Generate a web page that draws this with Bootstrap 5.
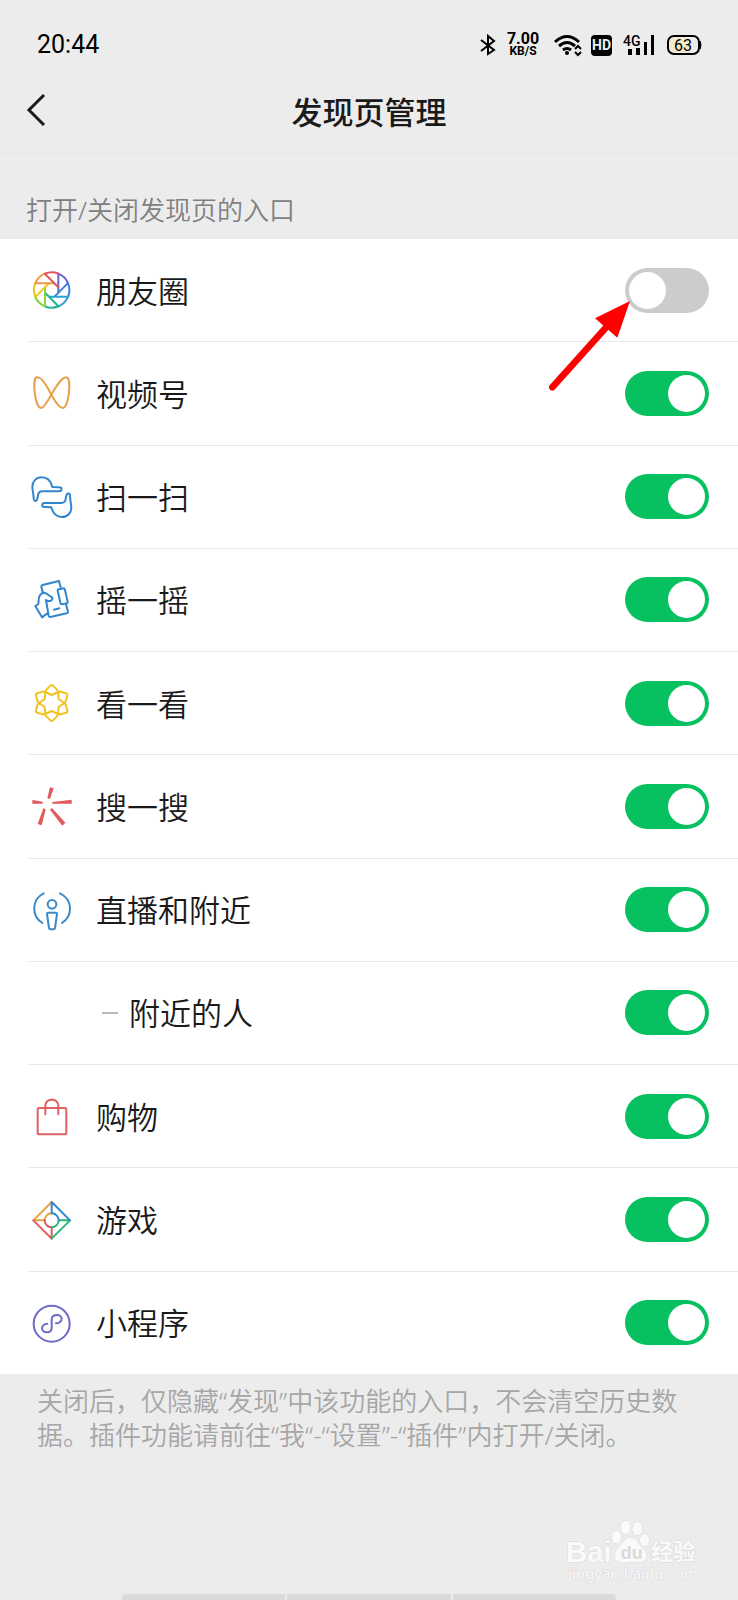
<!DOCTYPE html>
<html lang="zh-CN">
<head>
<meta charset="utf-8">
<meta name="viewport" content="width=device-width, initial-scale=1">
<title>发现页管理</title>
<link href="https://cdn.jsdelivr.net/npm/bootstrap@5.3.0/dist/css/bootstrap.min.css" rel="stylesheet">
<style>
  body { background: #ececec; color: #1a1a1a; font-family: "Noto Sans", "Noto Sans CJK SC", sans-serif; }
  svg { display: block; flex: none; overflow: visible; }
  .statusbar { height: 70px; padding: 20px 36px 0 37px; color: #000; font-family: Roboto, sans-serif; }
  .clock { font-size: 25px; line-height: 50px; }
  .speed { font-size: 16px; line-height: 13px; font-weight: 700; width: 34px; margin: 0 14px 0 10px; }
  .speed small { display: block; font-size: 12px; font-weight: 700; }
  .hd { width: 21px; height: 21px; border-radius: 4px; background: #000; color: #ececec; font-size: 14px; line-height: 21px; font-weight: 700; margin: 0 15px 0 9px; }
  .titlebar { height: 84px; border-bottom: 1px solid #e6e6e6; padding: 0 20px; }
  .titlebar h1 { font-size: 31px; line-height: 40px; font-weight: 500; }
  .back { width: 32px; height: 44px; }
  .section-title { font-size: 26px; line-height: 36px; font-weight: 350; padding: 38px 26px 11px; color: #808080; }
  .entries { min-height: 1135px; }
  .entry { margin-left: 29px; padding: 0 29px 0 2px; border-bottom: 1px solid #e6e6e6; min-height: 100px; }
  .entry:last-child { border-bottom: 0; }
  .entry label { gap: 25px; font-size: 31px; line-height: 44px; font-weight: 350; }
  .entry label > b { font-weight: inherit; padding-top: 1px; }
  .sub { padding-left: 71px; }
  .entry .sub { gap: 11px; }
  .dash { width: 16px; height: 2px; background: #b8b8b8; }
  .entry .form-check-input { width: 84px; height: 45px; margin: 0; padding: 4px; border: 0; border-radius: 23px; background: #ccc; flex: none; }
  .entry .form-check-input::before { content: ""; display: block; width: 37px; height: 37px; border-radius: 50%; background: #fff; }
  .entry .form-check-input:checked { background: #07c160; }
  .entry .form-check-input:checked::before { margin-left: auto; }
  .ico { width: 40px; height: 40px; fill: none; stroke-width: 6; stroke-linejoin: round; stroke-linecap: round; }
  .pointer { right: 103px; top: 56px; z-index: 2; pointer-events: none; }
  .note { font-size: 26px; line-height: 34px; font-weight: 350; padding: 10px 37px; color: #a6a6a6; }
  .watermark { margin: 0 38px 10px 0; }
  .homebar { width: 67%; gap: 2px; }
  .homebar span { height: 6px; background: #dadada; }
  .homebar span:first-child { border-radius: 4px 0 0 0; }
  .homebar span:last-child { border-radius: 0 4px 0 0; }
</style>
</head>
<body>
<div class="min-vh-100 d-flex flex-column">
  <header>
    <div class="statusbar d-flex align-items-center justify-content-between">
      <span class="clock">20:44</span>
      <div class="d-flex align-items-center">
        <svg width="16" height="22" viewBox="0 0 16 22" fill="none" stroke="#000" stroke-width="2"><path d="M1 6 14 16 8 20V2l6 5L1 17"/></svg>
        <div class="speed text-center">7.00<small>KB/S</small></div>
        <svg width="28" height="22" viewBox="0 0 28 22" fill="none" stroke="#000" stroke-width="3"><path d="M1 8q12-11 24 0M5 12q8-7 16 0M9 16q4-3 8 0"/><circle cx="13" cy="19" r="2" fill="#000" stroke="none"/><path d="m21 15 3-3 3 3M21 18l3 3 3-3" stroke-width="2"/></svg>
        <span class="hd text-center">HD</span>
        <svg width="31" height="22" viewBox="0 0 31 22"><text x="-4" y="12" font-size="14" font-weight="500">4G</text><path d="M1 15h4v6H1zM9 14h4v7H9zM17 8h3v13h-3zM24 1h3v20h-3z"/></svg>
        <svg class="ms-2" width="36" height="22" viewBox="0 0 36 22"><rect x="2" y="2" width="31" height="18" rx="6" fill="#ececec" stroke="#000" stroke-width="2"/><path d="M8 4h13v14H8q-4 0-4-4V8q0-4 4-4z" fill="#f4ebc9"/><path d="M34 7q2 4 0 8z" stroke="#000"/><text x="17" y="17" font-size="16" text-anchor="middle">63</text></svg>
      </div>
    </div>
    <nav class="titlebar d-flex align-items-center position-relative">
      <button type="button" class="back btn p-0 border-0 position-absolute" aria-label="返回">
        <svg width="32" height="40" viewBox="0 0 32 40" fill="none" stroke="#1a1a1a" stroke-width="3"><path d="M24 3 9 18l15 15"/></svg>
      </button>
      <h1 class="m-0 w-100 text-center">发现页管理</h1>
    </nav>
  </header>

  <main>
    <h2 class="section-title m-0">打开/关闭发现页的入口</h2>
    <div class="entries bg-white d-flex flex-column">
      <div class="entry flex-fill d-flex align-items-center position-relative">
        <label for="moments" class="d-flex align-items-center flex-fill">
          <svg class="ico" viewBox="33 45 120 120">
            <defs><path id="blade" d="M115 112V56A53 53 0 0 1 144 84"/></defs>
            <use href="#blade" stroke="#6467d0"/>
            <use href="#blade" stroke="#3d7fdb" transform="rotate(45 95 105)"/>
            <use href="#blade" stroke="#2ba0d4" transform="rotate(90 95 105)"/>
            <use href="#blade" stroke="#20b491" transform="rotate(135 95 105)"/>
            <use href="#blade" stroke="#8bd43a" transform="rotate(180 95 105)"/>
            <use href="#blade" stroke="#efc51b" transform="rotate(225 95 105)"/>
            <use href="#blade" stroke="#ee9a45" transform="rotate(270 95 105)"/>
            <use href="#blade" stroke="#df5560" transform="rotate(315 95 105)"/>
          </svg><b>朋友圈</b></label>
        <input class="form-check-input" type="checkbox" role="switch" id="moments">
        <svg class="pointer position-absolute" width="90" height="100" viewBox="45 135 270 300"><path d="M67 412 230 230" stroke="red" stroke-width="20" stroke-linecap="round"/><path d="M300 153 262 263 195 205z" fill="red"/></svg>
      </div>
      <div class="entry flex-fill d-flex align-items-center">
        <label for="channels" class="d-flex align-items-center flex-fill">
          <svg class="ico" viewBox="33 357 120 120" stroke="#e6a04b"><path d="M95 424C82 398 63 367 50 370 36 374 44 462 64 462 80 462 112 370 139 370 156 372 146 455 130 462 118 464 105 442 95 424z"/></svg><b>视频号</b></label>
        <input class="form-check-input" type="checkbox" role="switch" id="channels" checked>
      </div>
      <div class="entry flex-fill d-flex align-items-center">
        <label for="scan" class="d-flex align-items-center flex-fill">
          <svg class="ico" viewBox="33 51 120 120" stroke="#2f86cf"><defs><path id="hand" d="M43 122C51 125 52 118 54 106 55 96 60 94 68 94H117C127 94 127 82 117 82L97 81C93 65 85 52 65 52 48 52 37 65 37 80 37 92 41 100 41 115Q41 121 43 122z"/></defs><use href="#hand"/><use href="#hand" transform="rotate(180 95.500 111.500)"/></svg><b>扫一扫</b></label>
        <input class="form-check-input" type="checkbox" role="switch" id="scan" checked>
      </div>
      <div class="entry flex-fill d-flex align-items-center">
        <label for="shake" class="d-flex align-items-center flex-fill">
          <svg class="ico" viewBox="33 360 120 120" stroke="#2f86cf"><path d="M68 397 64 380Q64 376 68 375L117 363 122 382M138 433 144 455Q144 459 140 460L91 471Q87 471 86 467L78 420M78 420Q86 426 94 421 101 416 93 410L76 399C64 396 55 408 56 422L55 432 46 438 66 472 82 460M102 449 118 445"/><rect x="117" y="386" width="22" height="46" rx="5" transform="rotate(-13 128 409)"/></svg><b>摇一摇</b></label>
        <input class="form-check-input" type="checkbox" role="switch" id="shake" checked>
      </div>
      <div class="entry flex-fill d-flex align-items-center">
        <label for="look" class="d-flex align-items-center flex-fill">
          <svg class="ico" viewBox="33 40 120 120" stroke="#f2c31e"><defs><path id="petal" d="M76 67Q77 62 80 59L91 48Q95 44 99 48L110 59Q113 62 114 67L95 76z"/></defs>
            <use href="#petal"/><use href="#petal" transform="rotate(60 95 100)"/><use href="#petal" transform="rotate(120 95 100)"/><use href="#petal" transform="rotate(180 95 100)"/><use href="#petal" transform="rotate(240 95 100)"/><use href="#petal" transform="rotate(300 95 100)"/></svg><b>看一看</b></label>
        <input class="form-check-input" type="checkbox" role="switch" id="look" checked>
      </div>
      <div class="entry flex-fill d-flex align-items-center">
        <label for="search" class="d-flex align-items-center flex-fill">
          <svg class="ico" viewBox="33 349 120 120"><path fill="#e05a5c" d="M90 353 101 356 90 388 82 386zM37 391 68 396V402L37 402zM155 390V402L97 402V397zM70 416 77 419 65 467 53 463zM90 420 96 415 136 459 127 468z"/></svg><b>搜一搜</b></label>
        <input class="form-check-input" type="checkbox" role="switch" id="search" checked>
      </div>
      <div class="entry flex-fill d-flex align-items-center">
        <label for="live" class="d-flex align-items-center flex-fill">
          <svg class="ico" viewBox="33 59 120 120" stroke="#3b8ac6"><path d="M71 69C34 88 34 137 67 158M120 69C159 88 159 137 126 158M84 127H108Q111 127 111 131L105 173Q104 177 101 177H91Q88 177 87 173L81 131Q81 127 84 127z"/><circle cx="96" cy="102" r="13"/></svg><b>直播和附近</b></label>
        <input class="form-check-input" type="checkbox" role="switch" id="live" checked>
      </div>
      <div class="entry flex-fill d-flex align-items-center">
        <label for="nearby" class="sub d-flex align-items-center flex-fill"><span class="dash"></span><b>附近的人</b></label>
        <input class="form-check-input" type="checkbox" role="switch" id="nearby" checked>
      </div>
      <div class="entry flex-fill d-flex align-items-center">
        <label for="shopping" class="d-flex align-items-center flex-fill">
          <svg class="ico" viewBox="33 48 120 120" stroke="#df6161"><rect x="53" y="84" width="86" height="79" rx="5"/><path d="M76 103V75a20 20 0 0 1 39 0V103"/></svg><b>购物</b></label>
        <input class="form-check-input" type="checkbox" role="switch" id="shopping" checked>
      </div>
      <div class="entry flex-fill d-flex align-items-center">
        <label for="games" class="d-flex align-items-center flex-fill">
          <svg class="ico" viewBox="33 358 120 120"><path stroke="#e8a143" d="M95 364 40 419H74A21 21 0 0 1 95 398"/><path stroke="#df5a5c" d="M40 419 95 474V440A21 21 0 0 1 74 419"/><path stroke="#27b978" d="M95 474 150 419H116A21 21 0 0 1 95 440"/><path stroke="#2f86cf" d="M150 419 95 364V398A21 21 0 0 1 116 419"/></svg><b>游戏</b></label>
        <input class="form-check-input" type="checkbox" role="switch" id="games" checked>
      </div>
      <div class="entry flex-fill d-flex align-items-center">
        <label for="mini" class="d-flex align-items-center flex-fill">
          <svg class="ico" viewBox="33 667 120 120" stroke="#6d6bc8"><circle cx="95" cy="729" r="54"/><path d="M108 728C118 728 125 721 125 715 125 707 118 703 111 703 101 703 95 709 95 717V742C95 750 89 755 80 755 72 755 66 750 66 743 66 736 73 729 82 729"/></svg><b>小程序</b></label>
        <input class="form-check-input" type="checkbox" role="switch" id="mini" checked>
      </div>
    </div>
    <p class="note m-0">关闭后，仅隐藏“发现”中该功能的入口，不会清空历史数据。插件功能请前往“我“-“设置”-“插件”内打开/关闭。</p>
  </main>

  <footer class="mt-auto">
    <div class="watermark d-flex justify-content-end">
      <svg width="134" height="65" viewBox="78 55 402 195" fill="#fafafa" stroke="#d9d9d9" stroke-width="3" paint-order="stroke" font-family="Liberation Sans, sans-serif">
        <text x="78" y="184" font-size="88" font-weight="700">Bai</text>
        <ellipse cx="229" cy="109" rx="14" ry="19"/><ellipse cx="257" cy="80" rx="15" ry="20"/><ellipse cx="292" cy="84" rx="15" ry="20"/><ellipse cx="314" cy="118" rx="14" ry="18"/>
        <path d="M224 165C224 145 245 135 253 120 262 106 283 108 290 120 299 137 319 145 319 165 319 184 300 187 272 184 242 188 224 184 224 165z"/>
        <text x="242" y="175" font-size="54" font-weight="700" fill="#d9d9d9" stroke="none">du</text>
        <text x="333" y="177" font-size="67" font-weight="700" font-family="Noto Sans CJK SC, sans-serif">经验</text>
        <text x="84" y="236" font-size="45" font-family="Noto Sans, sans-serif">jingyan.baidu.com</text>
      </svg>
    </div>
    <div class="homebar d-flex mx-auto"><span class="flex-fill"></span><span class="flex-fill"></span><span class="flex-fill"></span></div>
  </footer>
</div>
<script src="https://cdn.jsdelivr.net/npm/bootstrap@5.3.0/dist/js/bootstrap.bundle.min.js"></script>
</body>
</html>
